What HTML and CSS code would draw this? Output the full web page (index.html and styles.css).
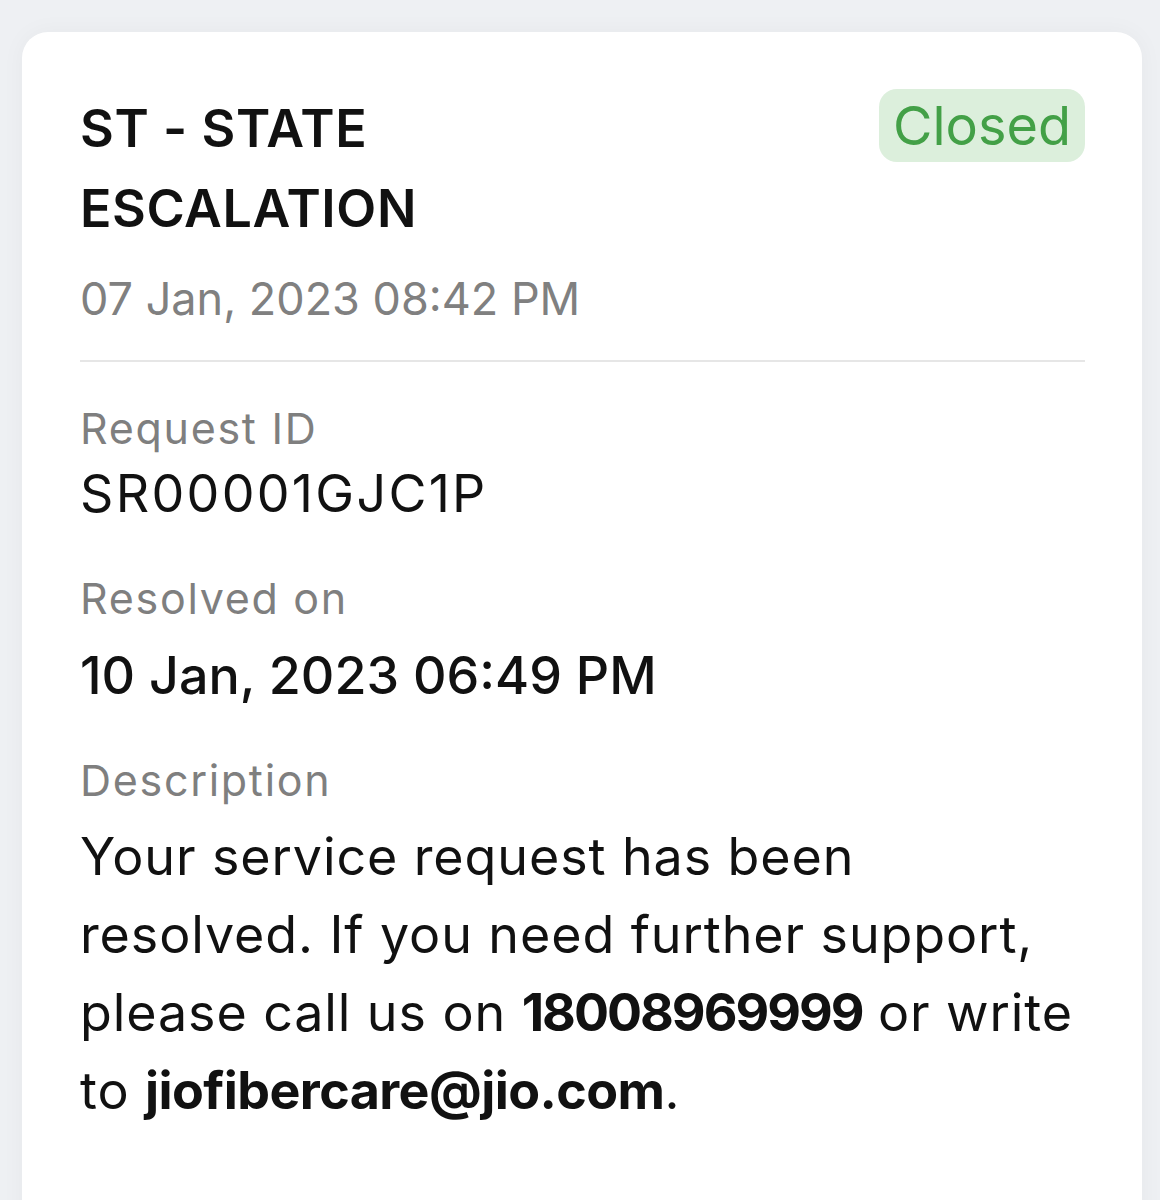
FILE: index.html
```html
<!DOCTYPE html>
<html lang="en">
<head>
    <meta charset="UTF-8">
    <meta name="viewport" content="width=device-width, initial-scale=1">
    <title>Service Request</title>
    <link rel="stylesheet" href="styles.css">
</head>
<body>
    <div class="card">
        <div class="card-head">
            <h1 class="title">ST - STATE<br>ESCALATION</h1>
            <span class="badge">Closed</span>
        </div>
        <div class="created">07 Jan, 2023 08:42 PM</div>

        <div class="field">
            <div class="label">Request ID</div>
            <div class="value value-id">SR00001GJC1P</div>
        </div>

        <div class="field">
            <div class="label">Resolved on</div>
            <div class="value value-date">10 Jan, 2023 06:49 PM</div>
        </div>

        <div class="field">
            <div class="label">Description</div>
            <p class="desc">Your service request has been resolved. If you need further support, please call us on <b class="phone">18008969999</b> or write to <b class="mail">jiofibercare@jio.com</b>.</p>
        </div>
    </div>
</body>
</html>
```

FILE: styles.css
```css
body {
    margin: 0;
    padding: 0;
    background: #eef0f3;
    font-family: Inter, "Liberation Sans", sans-serif;
    color: #111;
}

.card {
    margin: 32px 18px 0 22px;
    padding: 57px 57px 120px 58px;
    background: #fff;
    border-radius: 26px;
    box-shadow: 0 0 24px rgba(0, 0, 0, 0.04);
}

.card-head {
    display: flex;
    justify-content: space-between;
    align-items: flex-start;
}

.title {
    margin: 0;
    font-size: 52px;
    font-weight: 600;
    line-height: 80px;
    letter-spacing: 0.6px;
    color: #111;
}

.badge {
    padding: 6px 14px;
    font-size: 54px;
    line-height: 61px;
    color: #43a047;
    background: #dcefdc;
    border-radius: 18px;
}

.created {
    margin-top: 20px;
    padding-bottom: 31px;
    border-bottom: 2px solid #e6e6e6;
    font-size: 45px;
    line-height: 60px;
    color: #808080;
}

.field {
    margin-top: 38px;
}

.label {
    font-size: 43px;
    line-height: 56px;
    letter-spacing: 1.7px;
    color: #7f7f7f;
}

.value {
    font-size: 52px;
    line-height: 76px;
    color: #111;
}

.value-id {
    letter-spacing: 2.3px;
}

.value-date {
    margin-top: 12px;
    font-weight: 500;
}

.desc {
    margin: 10px 0 0;
    font-size: 52px;
    line-height: 78px;
    letter-spacing: 0.9px;
    color: #111;
}

.desc b {
    font-weight: 700;
}

.desc .phone {
    letter-spacing: -2px;
}

.desc .mail {
    letter-spacing: -0.6px;
}
```
